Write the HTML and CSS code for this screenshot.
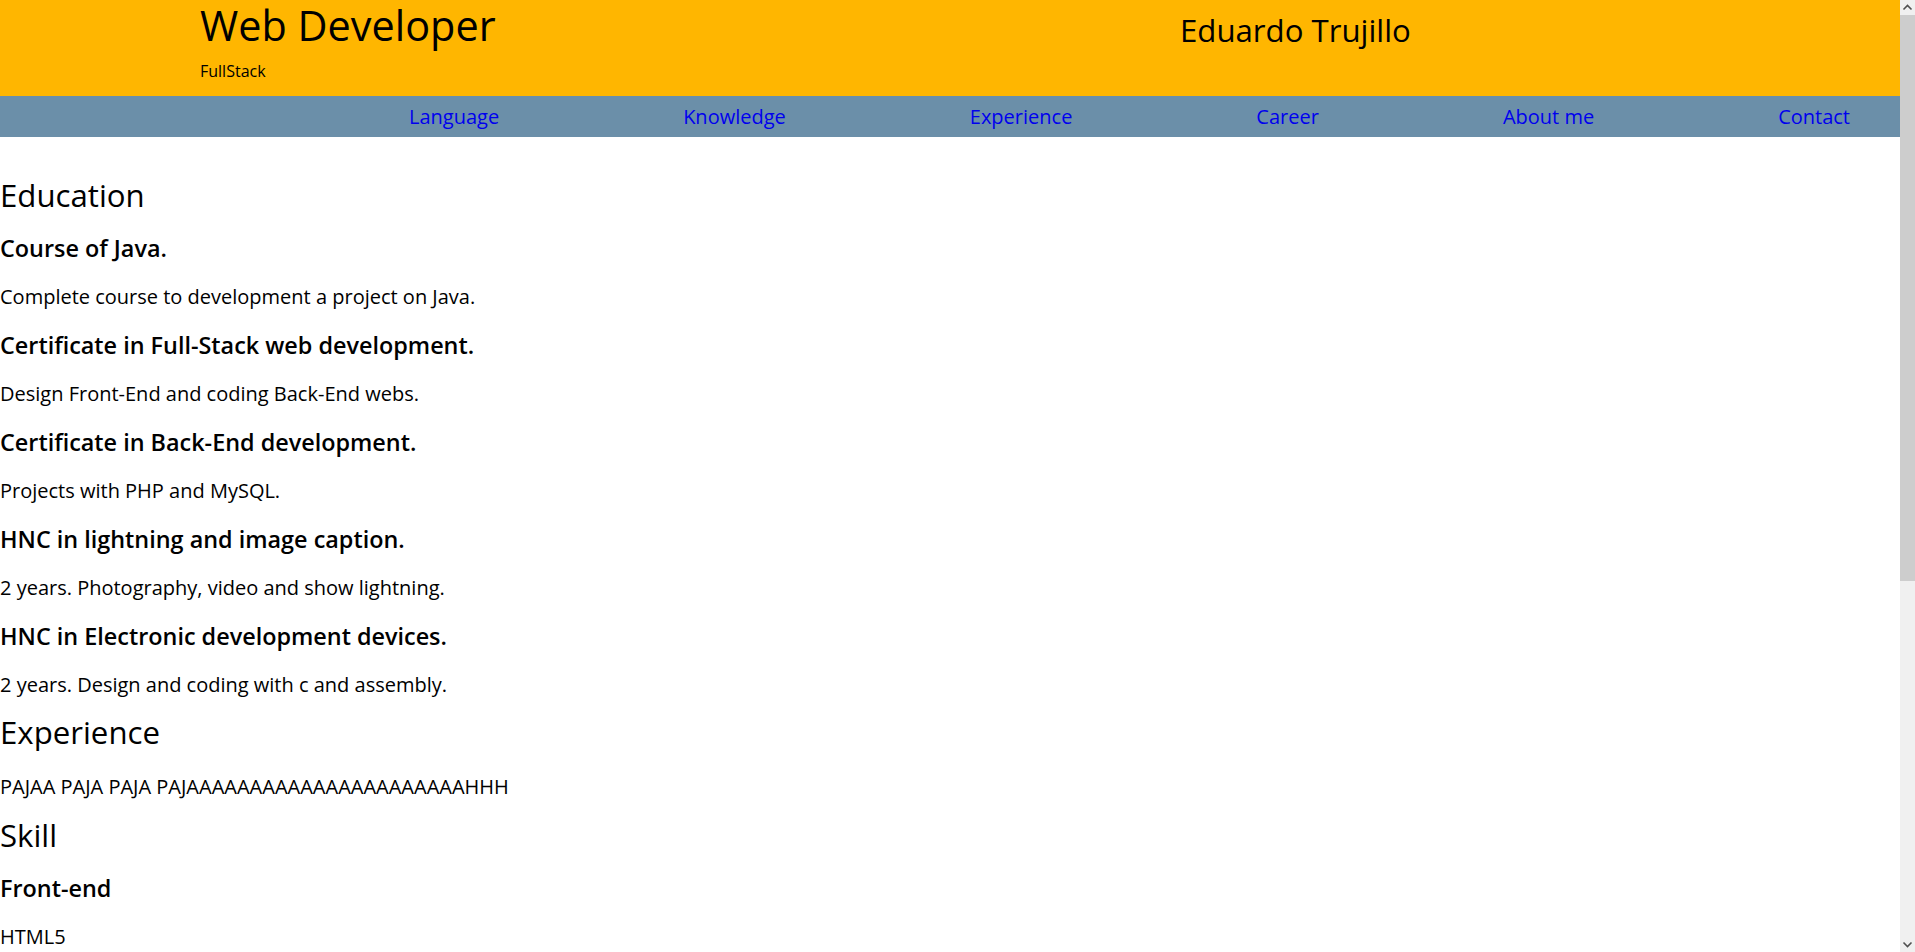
FILE: index.html
```html
<!DOCTYPE html>
<html lang="en">
<head>
<meta charset="utf-8">
<title>Eduardo Trujillo - Web Developer</title>
<link rel="stylesheet" href="styles.css">
</head>
<body>
<header class="site-header">
  <div class="brand">
    <h1 class="brand-title">Web Developer</h1>
    <p class="brand-sub">FullStack</p>
  </div>
  <div class="owner">
    <h2 class="owner-name">Eduardo Trujillo</h2>
  </div>
</header>
<nav class="main-nav">
  <ul class="nav-list">
    <li><a href="#language">Language</a></li>
    <li><a href="#knowledge">Knowledge</a></li>
    <li><a href="#experience">Experience</a></li>
    <li><a href="#career">Career</a></li>
    <li><a href="#about">About me</a></li>
    <li><a href="#contact">Contact</a></li>
  </ul>
</nav>
<main class="content">
  <section class="section" id="career">
    <h2 class="section-title">Education</h2>
    <h3 class="item-title">Course of Java.</h3>
    <p class="item-text">Complete course to development a project on Java.</p>
    <h3 class="item-title">Certificate in Full-Stack web development.</h3>
    <p class="item-text">Design Front-End and coding Back-End webs.</p>
    <h3 class="item-title">Certificate in Back-End development.</h3>
    <p class="item-text">Projects with PHP and MySQL.</p>
    <h3 class="item-title">HNC in lightning and image caption.</h3>
    <p class="item-text">2 years. Photography, video and show lightning.</p>
    <h3 class="item-title">HNC in Electronic development devices.</h3>
    <p class="item-text">2 years. Design and coding with c and assembly.</p>
  </section>
  <section class="section" id="experience">
    <h2 class="section-title">Experience</h2>
    <p class="item-text">PAJAA PAJA PAJA PAJAAAAAAAAAAAAAAAAAAAAAAHHH</p>
  </section>
  <section class="section" id="knowledge">
    <h2 class="section-title">Skill</h2>
    <h3 class="item-title">Front-end</h3>
    <p class="item-text">HTML5</p>
    <p class="item-text">CSS3</p>
    <p class="item-text">JavaScript</p>
    <h3 class="item-title">Back-end</h3>
    <p class="item-text">PHP</p>
    <p class="item-text">MySQL</p>
    <p class="item-text">Java</p>
  </section>
</main>
<div class="scrollbar" aria-hidden="true">
  <div class="scroll-btn">
    <svg width="15" height="15" viewBox="0 0 15 15"><polyline points="3.5,9.5 7.5,5.5 11.5,9.5" fill="none" stroke="#505050" stroke-width="1.6"/></svg>
  </div>
  <div class="scroll-track">
    <div class="scroll-thumb"></div>
  </div>
  <div class="scroll-btn">
    <svg width="15" height="15" viewBox="0 0 15 15"><polyline points="3.5,5.5 7.5,9.5 11.5,5.5" fill="none" stroke="#505050" stroke-width="1.6"/></svg>
  </div>
</div>
</body>
</html>
```

FILE: styles.css
```css
html {
  margin: 0;
  padding: 0;
}

body {
  margin: 0 15px 0 0;
  padding: 0;
  font-family: "Open Sans", "Noto Sans", sans-serif;
  font-size: 20px;
  color: #000;
  background: #fff;
}

.site-header {
  display: grid;
  grid-template-columns: 980px 1fr;
  padding: 5px 0 17px 200px;
  background: #ffb600;
}

.brand-title {
  margin: 0 0 18px;
  font-size: 41.4px;
  line-height: 40px;
  font-weight: normal;
}

.brand-sub {
  margin: 0;
  font-size: 16px;
  line-height: 16px;
}

.owner-name {
  margin: 10px 0 0;
  font-size: 31.2px;
  line-height: 30px;
  font-weight: normal;
}

.main-nav {
  background: #6b8fa9;
  padding: 7px 50px 7px 0;
}

.nav-list {
  display: flex;
  justify-content: flex-end;
  gap: 184px;
  margin: 0;
  padding: 0;
  list-style: none;
}

.nav-list a {
  color: #0000ee;
  text-decoration: none;
}

.content {
  padding-top: 37px;
}

.section {
  margin: 0;
}

.section + .section {
  margin-top: 13.6px;
}

.section > :last-child {
  margin-bottom: 0;
}

.section-title {
  margin: 0 0 15.5px;
  font-size: 31.2px;
  font-weight: normal;
}

.item-title {
  margin: 15.5px 0 19px;
  font-size: 23.4px;
  font-weight: 600;
}

.item-text {
  margin: 19px 0;
}

.section-title + .item-text {
  margin-top: 20.4px;
}

.scrollbar {
  position: fixed;
  top: 0;
  right: 0;
  width: 15px;
  height: 100vh;
  display: flex;
  flex-direction: column;
  background: #f0f0f0;
}

.scroll-btn {
  height: 15px;
  flex: none;
  display: flex;
  align-items: center;
  justify-content: center;
  background: #f0f0f0;
}

.scroll-btn svg {
  display: block;
}

.scroll-track {
  flex: 1;
}

.scroll-thumb {
  height: 566px;
  background: #cdcdcd;
}
```
